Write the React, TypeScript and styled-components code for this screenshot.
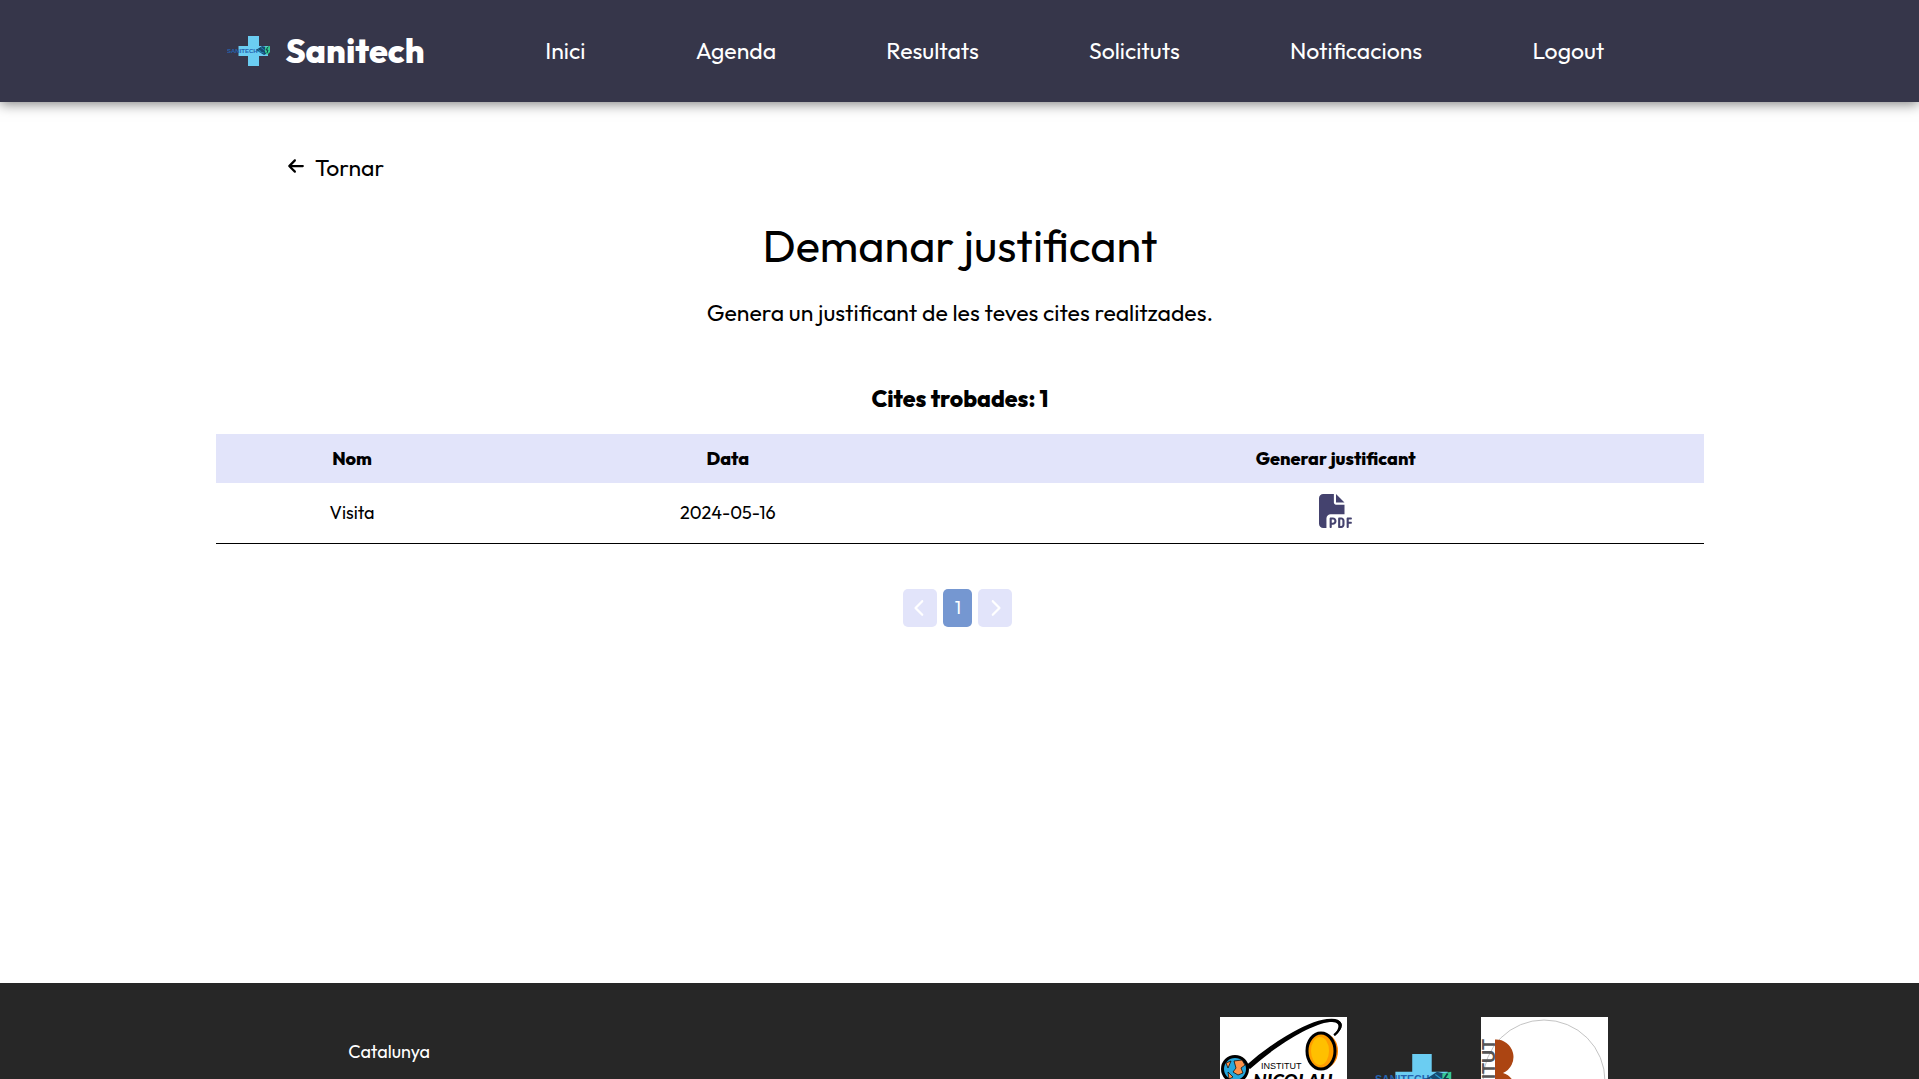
import React from "react";
import styled, { createGlobalStyle } from "styled-components";
import { FaArrowLeft, FaChevronLeft, FaChevronRight, FaFilePdf } from "react-icons/fa6";

const GlobalStyle = createGlobalStyle`
  *, *::before, *::after { box-sizing: border-box; }
  body {
    margin: 0;
    background: #fff;
    color: #000;
    font-family: Outfit, Lato, "Open Sans", sans-serif;
    font-size: 18px;
    line-height: 24px;
  }
`;

const Shell = styled.div`
  display: flex;
  flex-direction: column;
  height: 100vh;
  overflow-y: auto;
  scrollbar-width: none;
`;

const Header = styled.header`
  display: flex;
  flex-shrink: 0;
  align-items: center;
  justify-content: space-between;
  gap: 48px;
  height: 102px;
  padding: 0 16.4% 0 11.85%;
  background: #36364a;
  color: #fff;
  box-shadow: 0 2px 12px rgba(0, 0, 0, 0.5);
`;

const Brand = styled.a`
  display: flex;
  align-items: center;
  gap: 14px;
  color: inherit;
  font-size: 34px;
  font-weight: 800;
  line-height: 40px;
  text-decoration: none;
`;

const Nav = styled.nav`
  display: flex;
  flex: 0 1 1059px;
  justify-content: space-between;
  gap: 24px;
`;

const NavLink = styled.a`
  color: inherit;
  font-size: 23px;
  line-height: 32px;
  text-decoration: none;
`;

const Main = styled.main`
  display: flex;
  flex: 1 0 auto;
  flex-direction: column;
  align-items: center;
  width: 100%;
  min-height: calc(100vh - 198px);
  padding: 50px 11.2% 48px 11.25%;
`;

const BackLink = styled.a`
  display: flex;
  align-items: center;
  align-self: flex-start;
  gap: 10px;
  padding-left: 71px;
  color: inherit;
  font-size: 23px;
  line-height: 32px;
  text-decoration: none;

  svg {
    margin-bottom: 4px;
  }
`;

const Title = styled.h1`
  margin: 34px 0 0;
  font-size: 45px;
  font-weight: 400;
  line-height: 56px;
`;

const Lead = styled.p`
  margin: 23px 0 0;
  font-size: 23px;
  line-height: 32px;
`;

const Found = styled.h2`
  margin: 54px 0 0;
  font-size: 23px;
  font-weight: 800;
  line-height: 32px;
`;

const Table = styled.table`
  width: 100%;
  margin-top: 19px;
  border-collapse: collapse;
  table-layout: fixed;
  text-align: center;
`;

const Col = styled.col<{ $share: string }>`
  width: ${(p) => p.$share};
`;

const HeadCell = styled.th`
  height: 49px;
  padding: 0;
  background: #e2e4fa;
  font-weight: 800;
`;

const Cell = styled.td`
  height: 60px;
  padding: 0;
  border-bottom: 1px solid #000;
`;

const PdfButton = styled.button`
  display: inline-flex;
  padding: 0 0 3px;
  border: 0;
  background: none;
  color: #44426e;
  font-size: 34px;
  vertical-align: middle;
  cursor: pointer;
`;

const Pager = styled.nav`
  display: flex;
  gap: 6px;
  margin: 45px 4px 0 0;
`;

const PageButton = styled.button<{ $active?: boolean }>`
  display: flex;
  align-items: center;
  justify-content: center;
  width: ${(p) => (p.$active ? 29 : 34)}px;
  height: 38px;
  padding: 0;
  border: 0;
  border-radius: 5px;
  background: ${(p) => (p.$active ? "#7597d1" : "#e2e4fa")};
  color: #fff;
  font: inherit;
`;

const Footer = styled.footer`
  display: flex;
  flex-shrink: 0;
  align-items: flex-start;
  justify-content: space-between;
  padding: 34px 16.2% 34px 18.15%;
  background: #272727;
  color: #fff;
`;

const Place = styled.p`
  margin: 23px 0 0;
`;

const Logos = styled.div`
  display: flex;
  align-items: center;
  gap: 28px;
`;

function SanitechMark({ width }: { width: number }) {
  return (
    <svg width={width} viewBox="0 0 44 30" role="img" aria-label="Sanitech">
      <path d="M21 0h11v10h9v10h-9v10H21V20H11.500V10H21z" fill="#6bcdf2" />
      <text x="0" y="16.500" fontFamily="Liberation Sans, sans-serif" fontSize="6" fontWeight="700" fill="#2563ae">
        SANITECH
      </text>
      <path d="M29 14l6-4 4 1 4 5-6 3z" fill="#174a70" />
      <path d="M31 13.500l3 2m0-4 4 3M30 15l7 2" stroke="#2897c9" strokeWidth=".7" />
      <path d="M38 11l5-1v6l-3 3-2-3z" fill="#36c991" />
      <path d="M41 11l-2 3h2l-1 3" stroke="#123a4b" strokeWidth="1" fill="none" />
    </svg>
  );
}

function CopernicLogo() {
  return (
    <svg width="127" height="127" viewBox="0 0 127 127" role="img" aria-label="Institut Nicolau Copèrnic">
      <path d="M0 0h127v127H0z" fill="#fff" />
      <path d="M27 50C50 28 88 5 108 3c17-2 17 7 7 16l-1-1C120 10 121 5 110 5 90 7 53 31 30 52z" fill="#000" />
      <path d="M27 49C49 29 85 6 107 3c15-2 18 6 7 15" fill="none" stroke="#000" strokeWidth="2" />
      <ellipse cx="105" cy="34" rx="13" ry="17" fill="#ff8500" />
      <ellipse cx="101" cy="34" rx="14" ry="18" fill="#ff9d00" stroke="#000" strokeWidth="3" />
      <ellipse cx="100" cy="34" rx="9" ry="14" fill="#ffc000" />
      <circle cx="15" cy="52" r="12.500" fill="#27a7dc" stroke="#000" strokeWidth="3" />
      <path d="M14 44l8-1 3 5-4 3 2 5-5 2-5-3 3-4zM6 46l5-2-3 7zM8 55l5 5-4 2z" fill="#ff934c" stroke="#000" strokeWidth=".7" />
      <text x="41" y="52" fontFamily="Liberation Sans Narrow, Liberation Sans, sans-serif" fontSize="9" fill="#000">
        INSTITUT
      </text>
      <text x="33" y="71" fontFamily="Lato, sans-serif" fontSize="19" fontWeight="900" fontStyle="italic" fill="#000">
        NICOLAU
      </text>
      <text x="33" y="94" fontFamily="Lato, sans-serif" fontSize="19" fontWeight="900" fontStyle="italic" fill="#000">
        COPÈRNIC
      </text>
    </svg>
  );
}

function InstitutLogo() {
  return (
    <svg width="127" height="127" viewBox="0 0 127 127" role="img" aria-label="Institut B">
      <path d="M0 0h127v127H0z" fill="#fff" />
      <circle cx="63" cy="64" r="61" fill="none" stroke="#c4c4c4" />
      <text transform="translate(14 103) rotate(-90)" fontFamily="Liberation Sans, sans-serif" fontSize="18" fontWeight="700" fill="#555">
        INSTITUT
      </text>
      <path d="M14 22.500a17.500 17.500 0 0 1 8 33.500 17.500 17.500 0 0 1-8 34z" fill="#ac4512" />
    </svg>
  );
}

const links = ["Inici", "Agenda", "Resultats", "Solicituts", "Notificacions", "Logout"];

const visits = [{ name: "Visita", date: "2024-05-16" }];

export default function App() {
  return (
    <Shell>
      <GlobalStyle />
      <Header>
        <Brand href="#">
          <SanitechMark width={44} />
          Sanitech
        </Brand>
        <Nav aria-label="Principal">
          {links.map((label) => (
            <NavLink key={label} href="#">
              {label}
            </NavLink>
          ))}
        </Nav>
      </Header>
      <Main>
        <BackLink href="#">
          <FaArrowLeft size={18} />
          Tornar
        </BackLink>
        <Title>Demanar justificant</Title>
        <Lead>Genera un justificant de les teves cites realitzades.</Lead>
        <Found>Cites trobades: {visits.length}</Found>
        <Table>
          <colgroup>
            <Col $share="18.3%" />
            <Col $share="32.2%" />
            <Col $share="49.5%" />
          </colgroup>
          <thead>
            <tr>
              <HeadCell scope="col">Nom</HeadCell>
              <HeadCell scope="col">Data</HeadCell>
              <HeadCell scope="col">Generar justificant</HeadCell>
            </tr>
          </thead>
          <tbody>
            {visits.map((visit) => (
              <tr key={visit.date}>
                <Cell>{visit.name}</Cell>
                <Cell>{visit.date}</Cell>
                <Cell>
                  <PdfButton aria-label="Generar justificant">
                    <FaFilePdf />
                  </PdfButton>
                </Cell>
              </tr>
            ))}
          </tbody>
        </Table>
        <Pager aria-label="Pàgines">
          <PageButton aria-label="Anterior" disabled>
            <FaChevronLeft size={18} />
          </PageButton>
          <PageButton $active aria-current="page">
            1
          </PageButton>
          <PageButton aria-label="Següent" disabled>
            <FaChevronRight size={18} />
          </PageButton>
        </Pager>
      </Main>
      <Footer>
        <Place>Catalunya</Place>
        <Logos>
          <CopernicLogo />
          <SanitechMark width={78} />
          <InstitutLogo />
        </Logos>
      </Footer>
    </Shell>
  );
}
